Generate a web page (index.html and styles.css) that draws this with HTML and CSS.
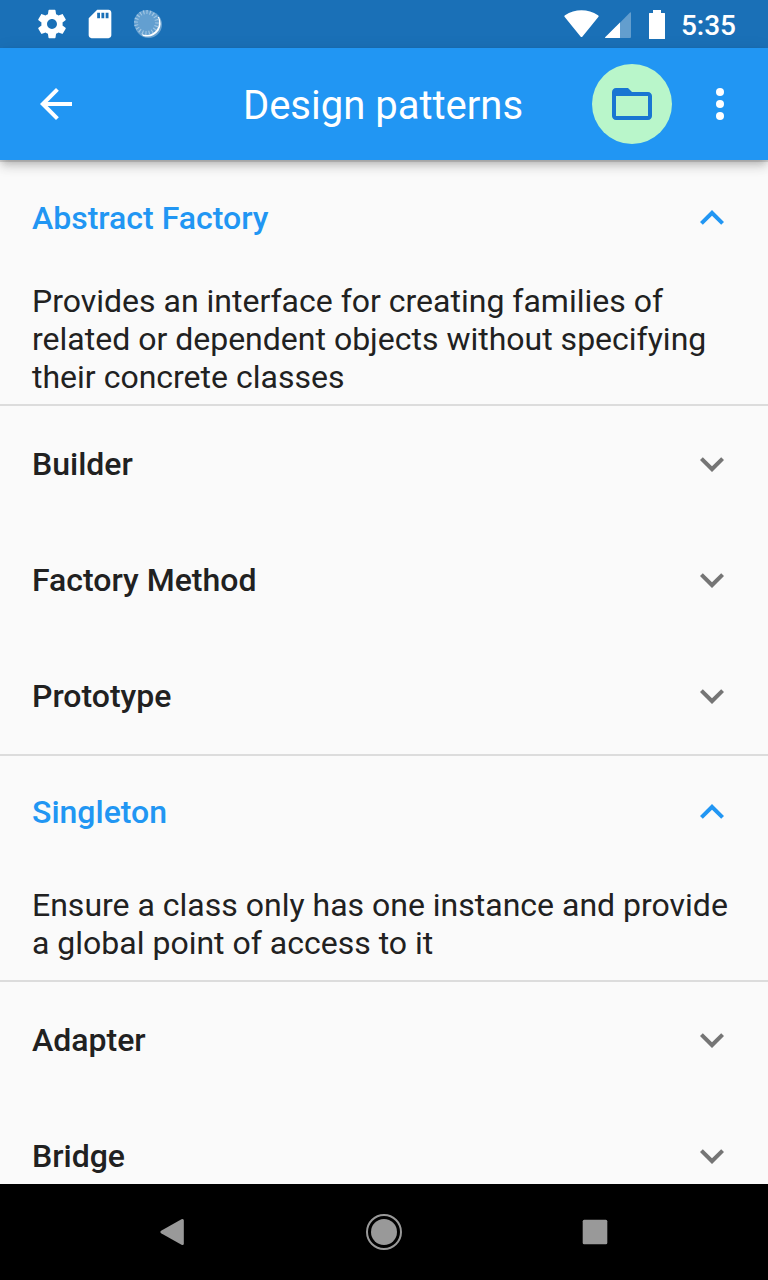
FILE: index.html
```html
<!DOCTYPE html>
<html lang="en">
<head>
<meta charset="utf-8">
<meta name="viewport" content="width=device-width, initial-scale=1">
<title>Design patterns</title>
<link rel="stylesheet" href="styles.css">
</head>
<body>
<div class="status-bar">
  <div class="status-group notifications">
    <svg class="status-icon" viewBox="0 0 24 24" aria-hidden="true"><path d="M19.43 12.98c.04-.32.07-.64.07-.98s-.03-.66-.07-.98l2.11-1.65c.19-.15.24-.42.12-.64l-2-3.46c-.12-.22-.39-.3-.61-.22l-2.49 1c-.52-.4-1.08-.73-1.69-.98l-.38-2.65C14.46 2.18 14.25 2 14 2h-4c-.25 0-.46.18-.49.42l-.38 2.65c-.61.25-1.17.59-1.69.98l-2.49-1c-.23-.09-.49 0-.61.22l-2 3.46c-.13.22-.07.49.12.64l2.11 1.65c-.04.32-.07.65-.07.98s.03.66.07.98l-2.11 1.65c-.19.15-.24.42-.12.64l2 3.46c.12.22.39.3.61.22l2.49-1c.52.4 1.08.73 1.69.98l.38 2.65c.03.24.24.42.49.42h4c.25 0 .46-.18.49-.42l.38-2.65c.61-.25 1.17-.59 1.69-.98l2.49 1c.23.09.49 0 .61-.22l2-3.46c.12-.22.07-.49-.12-.64l-2.11-1.65zM12 15.5c-1.93 0-3.5-1.57-3.5-3.5s1.57-3.5 3.5-3.5 3.5 1.57 3.5 3.5-1.57 3.5-3.5 3.5z"/></svg>
    <svg class="status-icon" viewBox="0 0 24 24" aria-hidden="true"><path d="M18 2h-8L4.020 8 4 20c0 1.100.9 2 2 2h12c1.100 0 2-.9 2-2V4c0-1.100-.9-2-2-2zm-6 6h-2V4h2v4zm3 0h-2V4h2v4zm3 0h-2V4h2v4z"/></svg>
    <svg class="status-icon" viewBox="0 0 34 34" aria-hidden="true">
      <circle cx="17.500" cy="17.500" r="13.500" opacity=".35"/>
      <path d="M28 10Q31.500 17 27.500 23.500Q22 31.500 12 29L10 26 26 10z"/>
      <circle cx="15.500" cy="15.500" r="12.500" class="sync-disc"/>
      <circle cx="15.500" cy="15.500" r="10.500" pathLength="60" class="sync-ticks"/>
    </svg>
  </div>
  <div class="status-group">
    <svg class="wifi" viewBox="0 0 35 28" aria-hidden="true"><path d="M.5 6.800Q0 5.800 1 5.200C11-1.500 24-1.500 34 5.200q1 .6.500 1.600L18.500 26.400q-1 1.100-2 0z"/></svg>
    <svg class="signal" viewBox="0 0 26 26" aria-hidden="true"><path d="M0 26 25 .5q1-.8 1 .5v24q0 1-1 1z" opacity=".32"/><path d="M15 10.500V26H.800q-1.200 0-.4-1z"/></svg>
    <svg class="battery" viewBox="0 0 16 29" aria-hidden="true"><path d="M4 0h8v3h3.500q.5 0 .5.500v25q0 .5-.5.500H.500q-.5 0-.5-.5v-25Q0 3 .500 3H4z"/></svg>
    <time class="clock">5:35</time>
  </div>
</div>

<header class="app-bar">
  <button class="icon-button" type="button" aria-label="Back"><svg class="icon" viewBox="0 0 24 24" aria-hidden="true"><path d="M20 11H7.830l5.590-5.590L12 4l-8 8 8 8 1.410-1.410L7.830 13H20v-2z"/></svg></button>
  <h1 class="title">Design patterns</h1>
  <div class="actions">
    <button class="icon-button folder-button" type="button" aria-label="Open category"><svg class="icon" viewBox="0 0 24 24" aria-hidden="true"><path d="M20 6h-8l-2-2H4c-1.100 0-1.990.9-1.990 2L2 18c0 1.100.9 2 2 2h16c1.100 0 2-.9 2-2V8c0-1.100-.9-2-2-2zm0 12H4V8h16v10z"/></svg></button>
    <button class="icon-button" type="button" aria-label="More options"><svg class="icon" viewBox="0 0 24 24" aria-hidden="true"><circle cx="12" cy="6" r="2"/><circle cx="12" cy="12" r="2"/><circle cx="12" cy="18" r="2"/></svg></button>
  </div>
</header>

<main class="list">
  <section class="tile open">
    <button class="tile-header" type="button" aria-expanded="true" aria-controls="abstract-factory">Abstract Factory<svg class="icon" viewBox="0 0 24 24" aria-hidden="true"><path d="M12 8l-6 6 1.410 1.410L12 10.830l4.590 4.580L18 14z"/></svg></button>
    <p class="tile-body" id="abstract-factory">Provides an interface for creating families of related or dependent objects without specifying their concrete classes</p>
  </section>
  <section class="tile">
    <button class="tile-header" type="button" aria-expanded="false">Builder<svg class="icon" viewBox="0 0 24 24" aria-hidden="true"><path d="M16.590 8.590L12 13.170 7.410 8.590 6 10l6 6 6-6z"/></svg></button>
  </section>
  <section class="tile">
    <button class="tile-header" type="button" aria-expanded="false">Factory Method<svg class="icon" viewBox="0 0 24 24" aria-hidden="true"><path d="M16.590 8.590L12 13.170 7.410 8.590 6 10l6 6 6-6z"/></svg></button>
  </section>
  <section class="tile">
    <button class="tile-header" type="button" aria-expanded="false">Prototype<svg class="icon" viewBox="0 0 24 24" aria-hidden="true"><path d="M16.590 8.590L12 13.170 7.410 8.590 6 10l6 6 6-6z"/></svg></button>
  </section>
  <section class="tile open roomy">
    <button class="tile-header" type="button" aria-expanded="true" aria-controls="singleton">Singleton<svg class="icon" viewBox="0 0 24 24" aria-hidden="true"><path d="M12 8l-6 6 1.410 1.410L12 10.830l4.590 4.580L18 14z"/></svg></button>
    <p class="tile-body" id="singleton">Ensure a class only has one instance and provide a global point of access to it</p>
  </section>
  <section class="tile">
    <button class="tile-header" type="button" aria-expanded="false">Adapter<svg class="icon" viewBox="0 0 24 24" aria-hidden="true"><path d="M16.590 8.590L12 13.170 7.410 8.590 6 10l6 6 6-6z"/></svg></button>
  </section>
  <section class="tile">
    <button class="tile-header" type="button" aria-expanded="false">Bridge<svg class="icon" viewBox="0 0 24 24" aria-hidden="true"><path d="M16.590 8.590L12 13.170 7.410 8.590 6 10l6 6 6-6z"/></svg></button>
  </section>
</main>

<nav class="system-nav" aria-label="System">
  <button class="nav-button" type="button" aria-label="Back"><svg class="nav-icon" viewBox="0 0 40 40" aria-hidden="true"><path d="M9.500 18.500 29.500 7.200q2.300-1 2.300 1.300v23q0 2.300-2.300 1.300L9.500 21.500q-2.400-1.500 0-3z"/></svg></button>
  <button class="nav-button" type="button" aria-label="Home"><svg class="nav-icon" viewBox="0 0 40 40" aria-hidden="true"><circle cx="20" cy="20" r="13"/><circle cx="20" cy="20" r="17" class="home-ring"/></svg></button>
  <button class="nav-button" type="button" aria-label="Recents"><svg class="nav-icon" viewBox="0 0 40 40" aria-hidden="true"><rect x="6.700" y="7.700" width="24.600" height="24.600" rx="1.500"/></svg></button>
</nav>
</body>
</html>
```
FILE: styles.css
```css
* {
  box-sizing: border-box;
}

body {
  margin: 0;
  height: 100vh;
  display: flex;
  flex-direction: column;
  background: #fafafa;
  color: #212121;
  font-family: Roboto, "Liberation Sans", sans-serif;
}

button {
  margin: 0;
  padding: 0;
  border: 0;
  background: none;
  color: inherit;
  font: inherit;
  cursor: pointer;
}

svg {
  display: block;
  flex: none;
  fill: currentColor;
}

.icon {
  width: 48px;
  height: 48px;
}

/* Status bar */
.status-bar {
  flex: none;
  display: flex;
  align-items: center;
  justify-content: space-between;
  height: 48px;
  padding: 0 32px 0 35px;
  background: #1a70b7;
  color: #fff;
}

.status-group {
  display: flex;
  align-items: center;
}

.notifications {
  gap: 14px;
}

.status-icon {
  width: 34px;
  height: 34px;
}

.sync-disc {
  fill: #639fd0;
}

.sync-ticks {
  fill: none;
  stroke: #a5c8e4;
  stroke-width: 4;
  stroke-dasharray: 1 2;
}

.wifi {
  width: 35px;
  height: 28px;
  margin-right: 6px;
}

.signal {
  width: 26px;
  height: 26px;
  margin: 2px 18px 0 0;
}

.battery {
  width: 16px;
  height: 29px;
  margin-right: 16px;
}

.clock {
  padding-top: 4px;
  font-size: 28px;
  font-weight: 500;
  line-height: 32px;
}

/* App bar */
.app-bar {
  flex: none;
  position: relative;
  z-index: 1;
  display: grid;
  grid-template-columns: 1fr auto 1fr;
  align-items: center;
  height: 112px;
  padding: 0 16px;
  background: #2196f3;
  color: #fff;
  box-shadow: 0 4px 8px -2px rgba(0, 0, 0, .2), 0 8px 10px rgba(0, 0, 0, .1), 0 2px 16px rgba(0, 0, 0, .08);
}

.icon-button {
  display: flex;
  align-items: center;
  justify-content: center;
  width: 80px;
  height: 80px;
  border-radius: 50%;
}

.title {
  margin: 0;
  padding: 4px 2px 0 0;
  font-size: 40px;
  font-weight: 400;
  line-height: 48px;
}

.actions {
  display: flex;
  justify-content: flex-end;
  gap: 8px;
  margin-right: -8px;
}

.folder-button {
  background: #b9f6ca;
  color: #1976d2;
}

/* Expandable list */
.list {
  flex: 1;
  min-height: 0;
  overflow: hidden;
}

.tile {
  border: solid transparent;
  border-width: 2px 0;
}

.tile.open {
  border-color: #dcdcdc;
}

.tile-header {
  display: flex;
  align-items: center;
  justify-content: space-between;
  width: 100%;
  height: 112px;
  padding: 0 32px;
  font-size: 32px;
  font-weight: 500;
  text-align: left;
}

.tile-header .icon {
  color: #757575;
}

.open .tile-header,
.open .icon {
  color: #2196f3;
}

.tile-body {
  margin: 0;
  padding: 8px 32px;
  font-size: 32px;
  line-height: 38px;
}

.roomy .tile-body {
  padding-block: 18px;
}

/* System navigation */
.system-nav {
  flex: none;
  display: flex;
  justify-content: space-between;
  height: 96px;
  padding: 0 66px;
  background: #000;
  color: #999;
}

.nav-button {
  display: flex;
  align-items: center;
  justify-content: center;
  width: 214px;
}

.home-ring {
  fill: none;
  stroke: currentColor;
  stroke-width: 2;
}

.nav-icon {
  width: 40px;
  height: 40px;
}
```
